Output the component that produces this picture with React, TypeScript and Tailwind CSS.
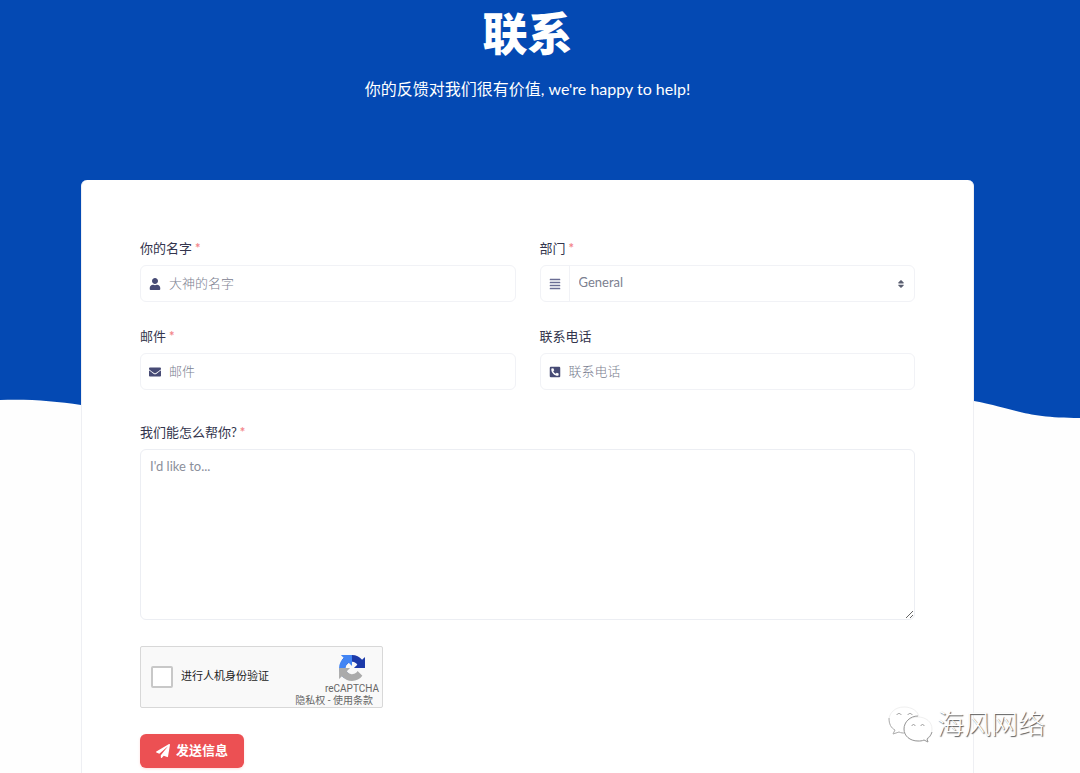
import React, { useState } from 'react';
import { FaUser, FaEnvelope, FaPhoneSquareAlt, FaAlignJustify, FaPaperPlane, FaSort } from 'react-icons/fa';

const inputBox = 'flex h-[37px] items-center rounded-md border border-[#f1f2f6] bg-white text-[13px]';
const inputText = 'h-full min-w-0 flex-1 bg-transparent pb-0.5 text-[#7b8090] outline-none placeholder:font-light placeholder:text-[#7b8090]';

function Label({ htmlFor, required, children }: { htmlFor: string; required?: boolean; children: React.ReactNode }) {
  return (
    <label htmlFor={htmlFor} className="mb-[7px] block text-[13px] leading-5 text-[#33354d]">
      {children}
      {required && <span className="ml-[3px] font-bold text-[#f3858a]">*</span>}
    </label>
  );
}

function RecaptchaLogo() {
  return (
    <svg viewBox="0 0 64 64" className="h-[26px] w-[26px]" aria-hidden="true">
      <path fill="#1c3aa9" d="M64 31.955a33.4 33.4 0 0 0-.035-1.38V4.687l-7.157 7.157A31.9 31.9 0 0 0 32.12.157c-10.4 0-19.65 5-25.48 12.733l11.73 11.854a15.5 15.5 0 0 1 4.752-5.334c2.05-1.6 4.953-2.906 8.966-2.906.485 0 .859.057 1.133.163 4.972.393 9.28 3.137 11.818 7.12l-8.303 8.303C47.25 32.053 59.13 32.032 64 31.955" />
      <path fill="#4285f4" d="M31.862.094c-.46.001-.918.012-1.373.033H4.688l7.157 7.157A31.9 31.9 0 0 0 .158 31.97c0 10.4 5 19.65 12.733 25.48l11.854-11.73a15.5 15.5 0 0 1-5.334-4.752c-1.6-2.05-2.906-4.953-2.906-8.966 0-.485.057-.859.163-1.133.393-4.972 3.137-9.28 7.12-11.818l8.303 8.303C32.07 16.84 32.1 4.96 31.862.094" />
      <path fill="#ababab" d="M.127 32.09c.001.46.012.918.033 1.373v25.8l7.157-7.157A31.9 31.9 0 0 0 32.003 63.79c10.4 0 19.65-5 25.48-12.733L45.753 39.2a15.5 15.5 0 0 1-4.752 5.334c-2.05 1.6-4.953 2.906-8.966 2.906-.485 0-.859-.057-1.133-.163-4.972-.393-9.28-3.137-11.818-7.12l8.303-8.303C16.87 31.9 4.99 31.92.127 32.09" />
    </svg>
  );
}

function WechatMark() {
  return (
    <svg viewBox="0 0 46 38" className="h-[38px] w-[46px]" fill="none" aria-hidden="true">
      <path fill="#fff" stroke="#f0f0f0" d="M17 2C8 2 2 8 2 15c0 4 2 8 6 10l-2 4 6-2c2 1 4 1 6 1M17 2c8 0 14 4 15 10" />
      <path stroke="#b0b0b0" d="M2 13c0 6 2 10 6 12l-2 4 6-2c2 1 4 1 6 1" />
      <path fill="#fff" stroke="#f0f0f0" d="M31 12c-8 0-14 5-14 12s6 12 14 12c2 0 4 0 6-1l4 2-1-4c3-2 5-5 5-9 0-7-6-12-14-12" />
      <path stroke="#999" d="M31 11c-8 0-14 6-14 13s6 12 14 12c2 0 4 0 6-1l4 2-1-3c3-2 4-4 5-7" />
      <path stroke="#999" d="M10 10c0-2 4-2 4 0M21 10c0-2 4-2 4 0M25 21c0-2 3-2 3 0M34 21c0-2 3-2 3 0" />
    </svg>
  );
}

export default function App() {
  const [verified, setVerified] = useState(false);

  return (
    <div className="relative flex min-h-screen flex-col bg-[#fefefe] font-['Lato','Noto_Sans_CJK_SC',sans-serif]">
      <header className="bg-[#0449b3] pr-[25px] pb-[296px] text-center text-white">
        <h1 className="pt-1 text-[45px] leading-[60px] font-black">联系</h1>
        <p className="mt-3.5 mb-px text-base leading-[22px]">你的反馈对我们很有价值, we're happy to help!</p>
      </header>
      <svg viewBox="0 0 1080 24" preserveAspectRatio="none" className="block h-6 w-full" aria-hidden="true">
        <path fill="#0449b3" d="M0 0H1080V21C1025 21 1016 12 974 4C900 -8 800 0 540 10C300 18 180 18 81 8C55 4 30 2 0 3Z" />
      </svg>

      <main className="-mt-[241px] flex flex-1 flex-col pr-[106px] pl-[81px]">
        <form
          onSubmit={(e) => e.preventDefault()}
          className="relative flex-1 rounded-t-md border-x border-[#eeeff3] bg-white px-[58px] pt-[58px] pb-1"
        >
          <div className="grid grid-cols-2 gap-x-6 gap-y-6">
            <div>
              <Label htmlFor="name" required>你的名字</Label>
              <div className={inputBox}>
                <FaUser className="mx-2 text-[#474b75]" size={12} />
                <input id="name" type="text" placeholder="大神的名字" className={inputText} />
              </div>
            </div>
            <div>
              <Label htmlFor="department" required>部门</Label>
              <div className={inputBox}>
                <FaAlignJustify className="mx-2 text-[#6a6d94]" size={12} />
                <div className="flex h-full flex-1 items-center border-l border-[#f1f2f6] pr-2">
                  <select id="department" className={`${inputText} appearance-none pl-[9px]`}>
                    <option>General</option>
                  </select>
                  <FaSort className="pointer-events-none text-[#5a5e70]" size={10} />
                </div>
              </div>
            </div>
            <div>
              <Label htmlFor="email" required>邮件</Label>
              <div className={inputBox}>
                <FaEnvelope className="mx-2 text-[#474b75]" size={12} />
                <input id="email" type="email" placeholder="邮件" className={inputText} />
              </div>
            </div>
            <div>
              <Label htmlFor="phone">联系电话</Label>
              <div className={inputBox}>
                <FaPhoneSquareAlt className="mx-2 text-[#474b75]" size={12} />
                <input id="phone" type="tel" placeholder="联系电话" className={inputText} />
              </div>
            </div>
          </div>

          <div className="mt-8">
            <Label htmlFor="message" required>我们能怎么帮你?</Label>
            <textarea
              id="message"
              placeholder="I'd like to..."
              className="block h-[171px] w-full resize rounded-md border border-[#eceef3] px-[9px] py-1.5 text-[13px] leading-5 outline-none placeholder:text-[#8b8f9b]"
            />
          </div>

          <div className="mt-[26px] flex h-[62px] w-[243px] justify-between rounded-xs border border-[#d8d8d8] bg-[#f9f9f9] font-['Roboto','Noto_Sans_CJK_SC',sans-serif]">
            <label className="flex items-center pl-2.5 text-[11px] whitespace-nowrap text-[#222]">
              <input
                type="checkbox"
                checked={verified}
                onChange={(e) => setVerified(e.target.checked)}
                className="mr-2 size-[22px] appearance-none rounded-xs border-2 border-[#c8c8c8] bg-white checked:bg-[#4285f4]"
              />
              进行人机身份验证
            </label>
            <div className="flex flex-col items-end pt-2 pr-[3px] text-[10px] leading-3 text-[#666]">
              <div className="flex flex-col items-center">
                <RecaptchaLogo />
                <span className="mt-0.5">reCAPTCHA</span>
              </div>
              <div className="pr-1.5 whitespace-nowrap">
                <a href="#privacy">隐私权</a> - <a href="#terms">使用条款</a>
              </div>
            </div>
          </div>

          <button
            type="submit"
            className="mt-[26px] flex h-[34px] items-center gap-1.5 rounded-md bg-[#ec5053] px-4 text-[13px] font-bold text-white shadow-sm shadow-red-100"
          >
            <FaPaperPlane size={14} />
            发送信息
          </button>
        </form>
      </main>

      <div className="pointer-events-none absolute right-[35px] bottom-[30px] flex items-center gap-1">
        <WechatMark />
        <span className="text-[27px] leading-9 font-light text-white [text-shadow:1px_1px_1px_#555]">海风网络</span>
      </div>
    </div>
  );
}
